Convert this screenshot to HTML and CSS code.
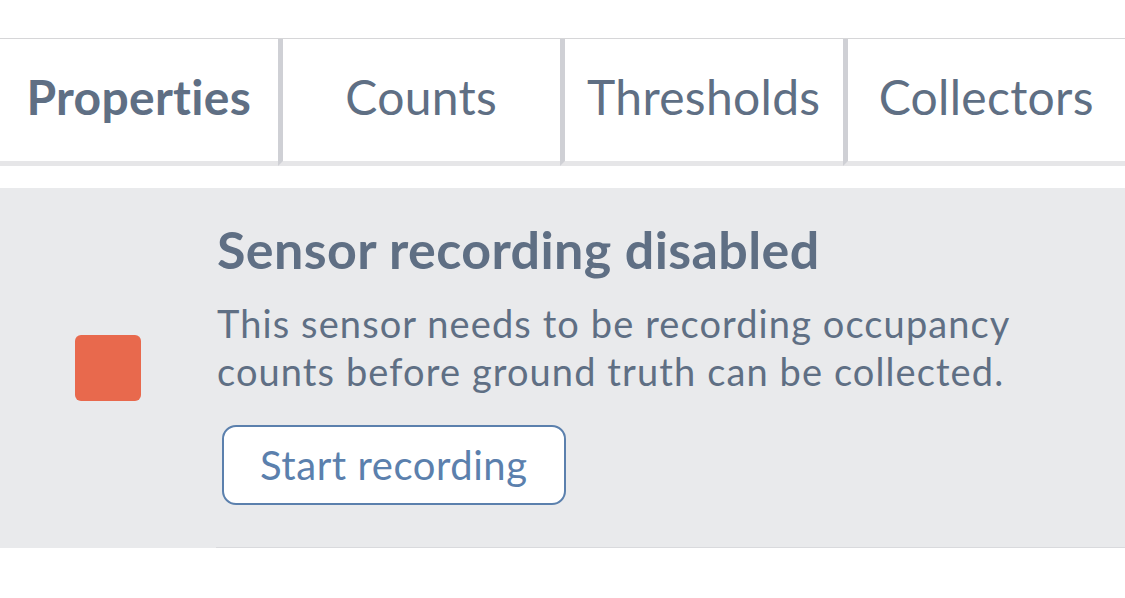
FILE: index.html
```html
<!DOCTYPE html>
<html lang="en">

<head>
    <meta charset="UTF-8">
    <meta name="viewport" content="width=device-width, initial-scale=1.0">
    <title>Sensor</title>
    <link rel="stylesheet" href="styles.css">
</head>

<body>
    <div class="tabs">
        <div class="tab active">Properties</div>
        <div class="tab">Counts</div>
        <div class="tab">Thresholds</div>
        <div class="tab">Collectors</div>
    </div>

    <div class="notice">
        <div class="notice-icon">
            <span class="status-box"></span>
        </div>
        <div class="notice-body">
            <h2 class="notice-title">Sensor recording disabled</h2>
            <p class="notice-text">This sensor needs to be recording occupancy counts before ground truth can be collected.</p>
            <button class="btn-outline">Start recording</button>
        </div>
    </div>
</body>

</html>
```

FILE: styles.css
```css
html,
body {
    margin: 0;
    padding: 0;
}

body {
    background: #fff;
    font-family: Lato, "Open Sans", sans-serif;
    font-variant-ligatures: none;
    color: #5f6f84;
}

.tabs {
    display: flex;
    margin-top: 38px;
    border-top: 1px solid #d6d6d8;
}

.tab {
    flex: 1;
    height: 115px;
    padding-bottom: 7px;
    display: flex;
    align-items: center;
    justify-content: center;
    font-size: 48px;
    letter-spacing: 0.3px;
    border-left: 5px solid #cfd0d5;
    border-bottom: 5px solid #e6e6e8;
}

.tab:first-child {
    border-left: 0;
}

.tab.active {
    font-weight: 700;
}

.notice {
    display: flex;
    margin-top: 22px;
    background: #e9eaec;
}

.notice-icon {
    width: 216px;
    display: flex;
    align-items: center;
    padding-left: 75px;
    box-sizing: border-box;
}

.status-box {
    display: block;
    width: 66px;
    height: 66px;
    border-radius: 6px;
    background: #e8694d;
}

.notice-body {
    flex: 1;
    padding: 31px 0 42px 1px;
    border-bottom: 1px solid #d9dadd;
}

.notice-title {
    margin: 0;
    font-size: 52px;
    font-weight: 700;
    letter-spacing: 0.4px;
    line-height: 60px;
}

.notice-text {
    margin: 20px 0 0;
    font-size: 38px;
    letter-spacing: 1.1px;
    line-height: 48px;
    max-width: 860px;
}

.btn-outline {
    display: block;
    margin: 30px 0 0 5px;
    padding: 0 36px;
    height: 80px;
    background: #fff;
    border: 2.5px solid #5b80ad;
    border-radius: 14px;
    color: #5b80ad;
    font-family: Lato, "Open Sans", sans-serif;
    font-size: 40px;
    letter-spacing: 0.55px;
}
```
